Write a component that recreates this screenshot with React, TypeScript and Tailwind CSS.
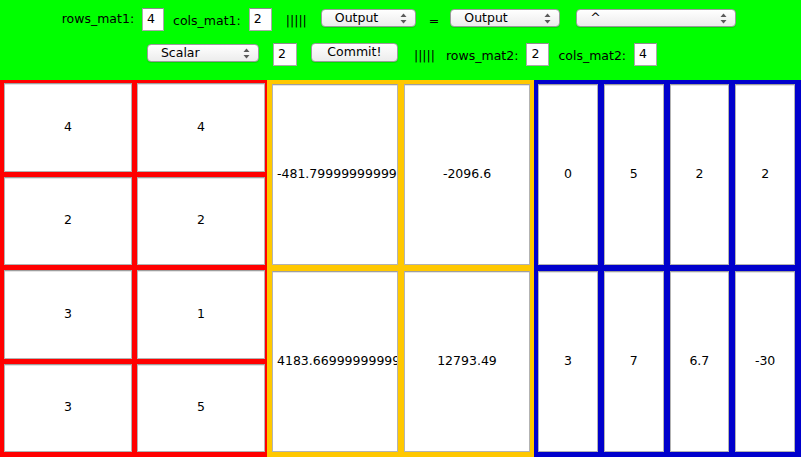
import React from "react";

const font = "font-['DejaVu_Sans',_'Liberation_Sans',_sans-serif]";

function Arrows() {
  return (
    <svg width="7" height="11" viewBox="0 0 7 11" className="shrink-0">
      <path d="M3.5 0.5 L6.5 4 L0.5 4 Z" fill="#5a5a5a" />
      <path d="M3.5 10.5 L6.5 7 L0.5 7 Z" fill="#5a5a5a" />
    </svg>
  );
}

function Combo({ label, w }: { label: string; w: string }) {
  return (
    <div
      className={`${w} h-[18px] mb-[3px] rounded-[4px] border border-[#9b9b9b] bg-gradient-to-b from-white to-[#ececec] flex items-center pl-[13px] pr-[8px] shadow-[0_1px_0_rgba(0,0,0,0.12)]`}
    >
      <span className="flex-1 text-[12.5px] leading-none text-black">{label}</span>
      <Arrows />
    </div>
  );
}

function Field({ v, w }: { v: string; w: string }) {
  return (
    <div
      className={`${w} h-[23px] bg-white border border-[#a9a9a9] border-t-[#8c8c8c] flex items-center pl-[4px] text-[12.5px] text-black`}
    >
      {v}
    </div>
  );
}

function Label({ t }: { t: string }) {
  return <span className="text-[12.5px] text-black whitespace-nowrap leading-none">{t}</span>;
}

function Cell({ v }: { v: string }) {
  return (
    <div className="bg-white border border-[#b3b3b3] border-t-[#9e9e9e] shadow-[inset_0_1px_0_#e4e4e4] flex items-center justify-center-safe overflow-hidden whitespace-nowrap px-[4px] text-[12.5px] text-black min-w-0 min-h-0">
      {v}
    </div>
  );
}

export default function App() {
  const red = ["4", "4", "2", "2", "3", "1", "3", "5"];
  const yellow = ["-481.79999999999995", "-2096.6", "4183.669999999999", "12793.49"];
  const blue = ["0", "5", "2", "2", "3", "7", "6.7", "-30"];
  return (
    <div className={`w-[801px] h-[457px] flex flex-col ${font} overflow-hidden`}>
      <div className="h-[80px] bg-[#00ff00] flex flex-col pt-[8px]">
        <div className="h-[23px] flex items-center justify-center pr-[3px]">
          <Label t="rows_mat1:" />
          <div className="ml-[8px]"><Field v="4" w="w-[22px]" /></div>
          <div className="ml-[9px]"><Label t="cols_mat1:" /></div>
          <div className="ml-[8px]"><Field v="2" w="w-[23px]" /></div>
          <div className="ml-[14px]"><Label t="|||||" /></div>
          <div className="ml-[14px] flex"><Combo label="Output" w="w-[95px]" /></div>
          <div className="ml-[13px]"><Label t="=" /></div>
          <div className="ml-[11px] flex"><Combo label="Output" w="w-[110px]" /></div>
          <div className="ml-[16px] flex"><Combo label="^" w="w-[160px]" /></div>
        </div>
        <div className="h-[23px] mt-[12px] flex items-center justify-center pl-[3px]">
          <div className="flex"><Combo label="Scalar" w="w-[112px]" /></div>
          <div className="ml-[14px]"><Field v="2" w="w-[24px]" /></div>
          <div className="ml-[14px]">
            <div className="w-[87px] h-[19px] rounded-[4px] border border-[#9b9b9b] bg-gradient-to-b from-white to-[#ececec] flex items-center justify-center text-[12.5px] text-black shadow-[0_1px_0_rgba(0,0,0,0.12)] -mt-[4px]">
              Commit!
            </div>
          </div>
          <div className="ml-[16px]"><Label t="|||||" /></div>
          <div className="ml-[11px]"><Label t="rows_mat2:" /></div>
          <div className="ml-[8px]"><Field v="2" w="w-[23px]" /></div>
          <div className="ml-[9px]"><Label t="cols_mat2:" /></div>
          <div className="ml-[8px]"><Field v="4" w="w-[23px]" /></div>
        </div>
      </div>
      <div className="flex-1 grid grid-cols-3 min-h-0">
        <div className="bg-[#ff0000] grid grid-cols-2 grid-rows-4 gap-[5px] pl-[4px] pr-[2px] pt-[3px] pb-[5px] min-h-0">
          {red.map((v, i) => (
            <Cell key={i} v={v} />
          ))}
        </div>
        <div className="bg-[#ffc800] grid grid-cols-2 grid-rows-2 gap-[6px] pl-[5px] pr-[4px] pt-[4px] pb-[5px] min-h-0">
          {yellow.map((v, i) => (
            <Cell key={i} v={v} />
          ))}
        </div>
        <div className="bg-[#0000cc] grid grid-cols-4 grid-rows-2 gap-[6px] pl-[4px] pr-[6px] pt-[4px] pb-[5px] min-h-0">
          {blue.map((v, i) => (
            <Cell key={i} v={v} />
          ))}
        </div>
      </div>
    </div>
  );
}
